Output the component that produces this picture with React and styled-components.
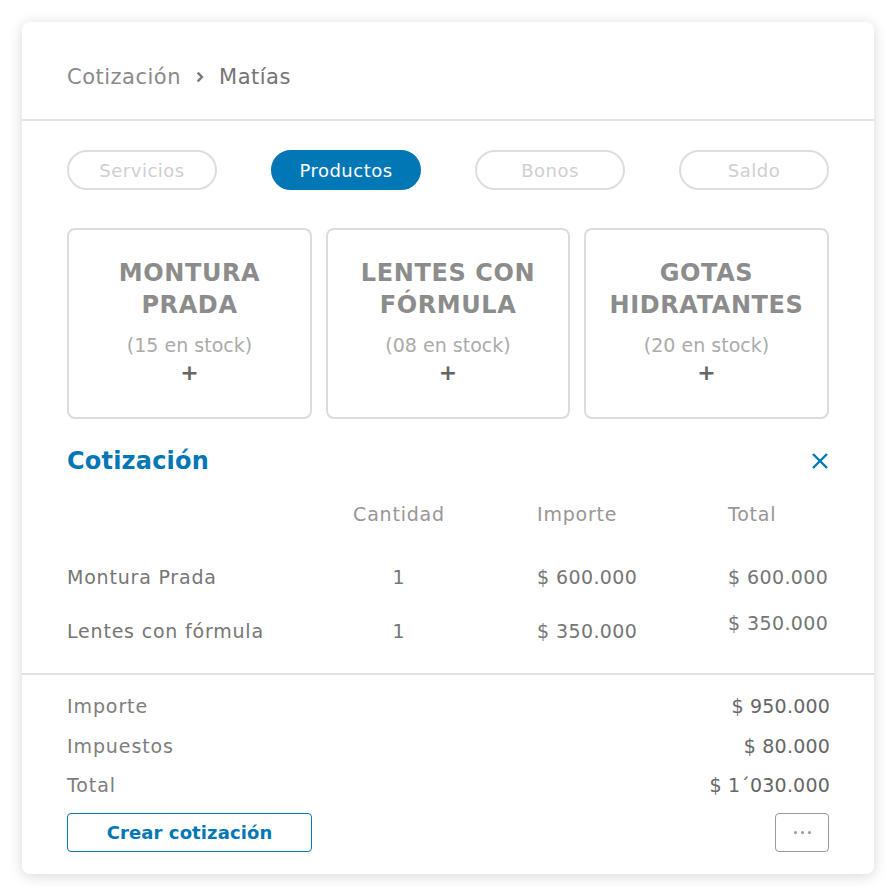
import React from "react"
import styled, { createGlobalStyle } from "styled-components"

// Cotización panel: tabs, product cards and a quote summary

const GlobalStyle = createGlobalStyle`
  body {
    margin: 0;
    background: #ffffff;
    font-family: "DejaVu Sans", "Noto Sans", sans-serif;
  }
`

const tabs = ["Servicios", "Productos", "Bonos", "Saldo"]

const products = [
  { name: ["MONTURA", "PRADA"], stock: "15" },
  { name: ["LENTES CON", "FÓRMULA"], stock: "08" },
  { name: ["GOTAS", "HIDRATANTES"], stock: "20" },
]

const items = [
  { name: "Montura Prada", qty: 1, price: "$ 600.000", total: "$ 600.000" },
  { name: "Lentes con fórmula", qty: 1, price: "$ 350.000", total: "$ 350.000", lift: true },
]

const summary = [
  { label: "Importe", value: "$ 950.000", h: 42 },
  { label: "Impuestos", value: "$ 80.000", h: 38 },
  { label: "Total", value: "$ 1´030.000", h: 40 },
]

const App = () => {
  return (
    <>
      <GlobalStyle />
      <Page>
        <Card>
          <Header>
            <Crumb>Cotización</Crumb>
            <Chevron viewBox="0 0 12 12">
              <path d="M4 2.3 L7.7 6 L4 9.7" fill="none" stroke="#777" strokeWidth="2" />
            </Chevron>
            <Crumb $strong>Matías</Crumb>
          </Header>

          <Body>
            <Tabs>
              {tabs.map((t) => (
                <Tab key={t} $active={t === "Productos"}>
                  {t}
                </Tab>
              ))}
            </Tabs>

            <Products>
              {products.map((p) => (
                <Product key={p.stock}>
                  <ProductName>
                    {p.name[0]}
                    <br />
                    {p.name[1]}
                  </ProductName>
                  <Stock>({p.stock} en stock)</Stock>
                  <Plus>+</Plus>
                </Product>
              ))}
            </Products>

            <QuoteHead>
              <QuoteTitle>Cotización</QuoteTitle>
              <CloseIcon viewBox="0 0 20 20">
                <path d="M3 3 L17 17 M17 3 L3 17" stroke="#0277b6" strokeWidth="2.4" />
              </CloseIcon>
            </QuoteHead>

            <TableRow $head>
              <span />
              <Cell $center>Cantidad</Cell>
              <Cell $pad>Importe</Cell>
              <Cell>Total</Cell>
            </TableRow>
            <Rows>
              {items.map((it) => (
                <TableRow key={it.name}>
                  <Cell $dark>{it.name}</Cell>
                  <Cell $center $dark>{it.qty}</Cell>
                  <Cell $pad $dark $num>{it.price}</Cell>
                  <Cell $dark $num $lift={it.lift}>{it.total}</Cell>
                </TableRow>
              ))}
            </Rows>
          </Body>

          <Divider />

          <Footer>
            {summary.map((s) => (
              <SumRow key={s.label} $h={s.h}>
                <SumLabel>{s.label}</SumLabel>
                <SumValue>{s.value}</SumValue>
              </SumRow>
            ))}
            <Actions>
              <CreateBtn>Crear cotización</CreateBtn>
              <MoreBtn>
                <Dot />
                <Dot />
                <Dot />
              </MoreBtn>
            </Actions>
          </Footer>
        </Card>
      </Page>
    </>
  )
}

const Page = styled.div`
  padding: 22px;
`

const Card = styled.div`
  width: 852px;
  height: 852px;
  background: #fff;
  border-radius: 8px;
  box-shadow: 0 2px 14px rgba(0, 0, 0, 0.16);
  display: flex;
  flex-direction: column;
  box-sizing: border-box;
`

const Header = styled.div`
  height: 99px;
  box-sizing: border-box;
  padding: 12px 45px 0;
  display: flex;
  align-items: center;
  border-bottom: 2px solid #e2e2e2;
`

const Crumb = styled.span`
  font-size: 21px;
  color: ${(p) => (p.$strong ? "#747474" : "#8a8a8a")};
  letter-spacing: 0.5px;
`

const Chevron = styled.svg`
  width: 14px;
  height: 14px;
  margin: 0 12px 0 12px;
`

const Body = styled.div`
  padding: 29px 45px 0;
`

const Tabs = styled.div`
  display: flex;
  justify-content: space-between;
`

const Tab = styled.div`
  width: 150px;
  height: 40px;
  box-sizing: border-box;
  border-radius: 20px;
  display: flex;
  align-items: center;
  justify-content: center;
  font-size: 18px;
  letter-spacing: 0.5px;
  background: ${(p) => (p.$active ? "#0277b6" : "#fff")};
  color: ${(p) => (p.$active ? "#fff" : "#cfcfcf")};
  border: 2px solid ${(p) => (p.$active ? "#0277b6" : "#dedede")};
`

const Products = styled.div`
  display: grid;
  grid-template-columns: 245px 244px 245px;
  justify-content: space-between;
  margin-top: 38px;
`

const Product = styled.div`
  height: 191px;
  box-sizing: border-box;
  border: 2px solid #dcdcdc;
  border-radius: 8px;
  display: flex;
  flex-direction: column;
  align-items: center;
  padding-top: 27px;
`

const ProductName = styled.div`
  font-size: 24px;
  font-weight: 600;
  line-height: 32px;
  letter-spacing: 0.6px;
  color: #8c8c8c;
  text-align: center;
`

const Stock = styled.div`
  font-size: 19px;
  color: #ababab;
  margin-top: 12px;
  line-height: 24px;
`

const Plus = styled.div`
  font-size: 22px;
  font-weight: 600;
  color: #666;
  line-height: 24px;
  margin-top: 4px;
`

const QuoteHead = styled.div`
  display: flex;
  align-items: center;
  justify-content: space-between;
  margin-top: 27px;
  height: 30px;
`

const QuoteTitle = styled.div`
  font-size: 24px;
  font-weight: 600;
  letter-spacing: 0.2px;
  color: #0277b6;
`

const CloseIcon = styled.svg`
  width: 20px;
  height: 20px;
  margin-right: -1px;
`

const TableRow = styled.div`
  display: grid;
  grid-template-columns: 286px 92px 1fr 101px;
  align-items: center;
  height: ${(p) => (p.$head ? "40px" : "54px")};
  margin-top: ${(p) => (p.$head ? "18px" : "0")};
  color: ${(p) => (p.$head ? "#9a9597" : "#777")};
  font-size: 19px;
  letter-spacing: 0.8px;
`

const Rows = styled.div`
  padding-top: 16px;
`

const Cell = styled.span`
  text-align: ${(p) => (p.$center ? "center" : "left")};
  padding-left: ${(p) => (p.$pad ? "92px" : "0")};
  color: ${(p) => (p.$dark ? "#767676" : "inherit")};
  letter-spacing: ${(p) => (p.$num ? "0.4px" : "inherit")};
  white-space: nowrap;
  align-self: ${(p) => (p.$lift ? "start" : "center")};
  padding-top: ${(p) => (p.$lift ? "8px" : "0")};
`

const Divider = styled.div`
  height: 2px;
  background: #e2e2e2;
  margin-top: 15px;
`

const Footer = styled.div`
  padding: 10px 45px 0;
  display: flex;
  flex-direction: column;
`

const SumRow = styled.div`
  display: flex;
  justify-content: space-between;
  align-items: center;
  height: ${(p) => p.$h}px;
  font-size: 19px;
`

const SumLabel = styled.span`
  color: #7d7d7d;
  letter-spacing: 0.9px;
`

const SumValue = styled.span`
  color: #666;
  letter-spacing: 0.2px;
  margin-right: -1px;
`

const Actions = styled.div`
  display: flex;
  justify-content: space-between;
  margin-top: 8px;
`

const CreateBtn = styled.button`
  width: 245px;
  height: 39px;
  border: 1.5px solid #0277b6;
  border-radius: 4px;
  background: #fff;
  color: #0277b6;
  font-family: inherit;
  font-size: 18px;
  font-weight: 600;
  letter-spacing: 0.1px;
  padding: 0;
`

const MoreBtn = styled.button`
  width: 54px;
  height: 39px;
  border: 1.5px solid #9a9a9a;
  border-radius: 4px;
  background: #fff;
  display: flex;
  align-items: center;
  justify-content: center;
  gap: 4px;
  padding: 0;
`

const Dot = styled.span`
  width: 3px;
  height: 3px;
  border-radius: 50%;
  background: #9a9a9a;
`

export default App
